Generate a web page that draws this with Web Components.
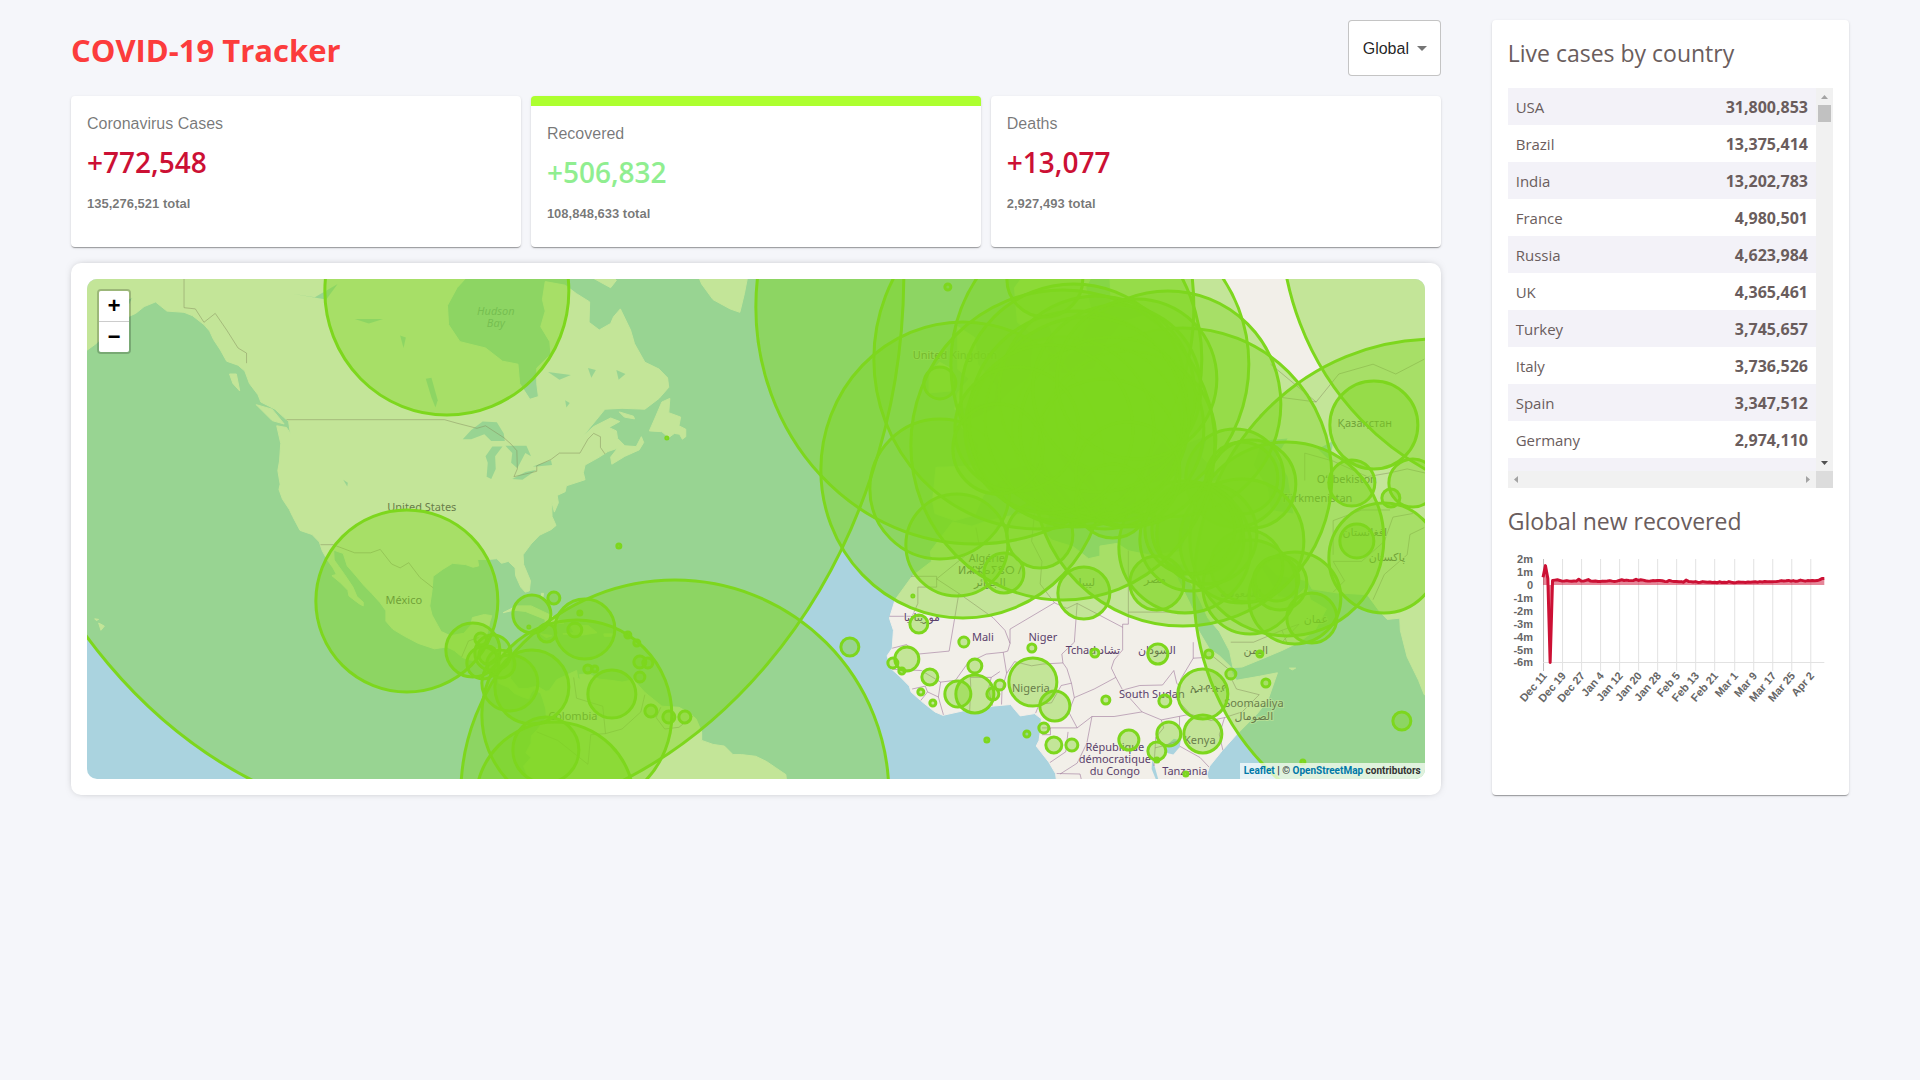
<!DOCTYPE html>
<html lang="en">
<head>
<meta charset="utf-8">
<meta name="viewport" content="width=device-width, initial-scale=1">
<title>COVID-19 Tracker</title>
<style>
    * { box-sizing: border-box; }

    body {
        margin: 0;
        min-height: 100vh;
        background: #f5f6fa;
        font-family: "Open Sans", "Noto Sans", sans-serif;
        color: #6a5d5d;
    }
</style>
</head>
<body>
<covid-app>
    <h1 slot="title">COVID-19 Tracker</h1>
    <country-select slot="picker"></country-select>

    <info-box slot="stats" label="Coronavirus Cases" cases="+772,548" total="135,276,521 total"></info-box>
    <info-box slot="stats" label="Recovered" cases="+506,832" total="108,848,633 total" active></info-box>
    <info-box slot="stats" label="Deaths" cases="+13,077" total="2,927,493 total"></info-box>

    <covid-map slot="map"></covid-map>

    <h3 slot="side">Live cases by country</h3>
    <country-table slot="side"></country-table>
    <h3 slot="side">Global new recovered</h3>
    <line-graph slot="side"></line-graph>
</covid-app>

<script>
class CovidApp extends HTMLElement {
    constructor() {
        super();
        this.attachShadow({ mode: "open" });
        this.shadowRoot.innerHTML = `
            <style>
                :host {
                    display: grid;
                    grid-template-columns: minmax(0, 23fr) minmax(0, 6fr);
                    gap: 51px;
                    padding: 20px 71px;
                }

                header {
                    display: flex;
                    justify-content: space-between;
                    align-items: center;
                    margin-bottom: 20px;
                }

                .stats {
                    display: flex;
                    gap: 10px;
                    margin-bottom: 16px;
                }

                .side {
                    background: #fff;
                    border-radius: 4px;
                    padding: 16px;
                    box-shadow: 0 2px 1px -1px rgba(0,0,0,.2), 0 1px 1px 0 rgba(0,0,0,.14), 0 1px 3px 0 rgba(0,0,0,.12);
                }

                ::slotted(h1) {
                    margin: 0;
                    padding-top: 4px;
                    font-size: 31px;
                    line-height: 44px;
                    font-weight: 700;
                    color: #fc3c3c;
                }

                ::slotted(h3) {
                    margin: 0 0 18px;
                    font-size: 23px;
                    line-height: 34px;
                    font-weight: 400;
                }

                ::slotted(country-table) { margin-bottom: 16px; }
            </style>
            <main>
                <header>
                    <slot name="title"></slot>
                    <slot name="picker"></slot>
                </header>
                <div class="stats"><slot name="stats"></slot></div>
                <slot name="map"></slot>
            </main>
            <aside class="side"><slot name="side"></slot></aside>
        `;
    }
}

class CountrySelect extends HTMLElement {
    constructor() {
        super();
        this.attachShadow({ mode: "open" });
        this.shadowRoot.innerHTML = `
            <style>
                :host { display: block; }

                .field {
                    display: grid;
                    align-items: center;
                }

                select, svg { grid-area: 1 / 1; }

                select {
                    appearance: none;
                    height: 56px;
                    padding: 0 30px 0 14px;
                    border: 1px solid rgba(0, 0, 0, .23);
                    border-radius: 4px;
                    background: #fff;
                    color: rgba(0, 0, 0, .87);
                    font: 16px "Liberation Sans", Arial, sans-serif;
                    cursor: pointer;
                }

                svg {
                    justify-self: end;
                    margin-right: 7px;
                    pointer-events: none;
                    fill: rgba(0, 0, 0, .54);
                }
            </style>
            <div class="field">
                <select aria-label="Country">
                    <option>Global</option>
                </select>
                <svg width="24" height="24" viewBox="0 0 24 24"><path d="M7 10l5 5 5-5z"/></svg>
            </div>
        `;
    }
}

class InfoBox extends HTMLElement {
    constructor() {
        super();
        this.attachShadow({ mode: "open" });
        this.shadowRoot.innerHTML = `
            <style>
                :host {
                    display: block;
                    flex: 1;
                    padding: 16px 16px 24px;
                    background: #fff;
                    border-radius: 4px;
                    box-shadow: 0 2px 1px -1px rgba(0,0,0,.2), 0 1px 1px 0 rgba(0,0,0,.14), 0 1px 3px 0 rgba(0,0,0,.12);
                    font-family: "Liberation Sans", Arial, sans-serif;
                    cursor: pointer;
                }

                :host([active]) { border-top: 10px solid greenyellow; }

                p {
                    margin: 0;
                    color: rgba(0, 0, 0, .54);
                }

                .label {
                    font-size: 16px;
                    line-height: 24px;
                }

                h2 {
                    margin: 8px 0 14px;
                    font: 600 28px/36px "Open Sans", "Noto Sans", sans-serif;
                    color: #cc1034;
                }

                :host([active]) h2 { color: lightgreen; }

                .total {
                    font-size: 13px;
                    line-height: 19px;
                    font-weight: 700;
                }
            </style>
            <p class="label"></p>
            <h2></h2>
            <p class="total"></p>
        `;
    }

    connectedCallback() {
        this.shadowRoot.querySelector(".label").textContent = this.getAttribute("label");
        this.shadowRoot.querySelector("h2").textContent = this.getAttribute("cases");
        this.shadowRoot.querySelector(".total").textContent = this.getAttribute("total");
    }
}

const COUNTRIES = [
    ["USA", "31,800,853"],
    ["Brazil", "13,375,414"],
    ["India", "13,202,783"],
    ["France", "4,980,501"],
    ["Russia", "4,623,984"],
    ["UK", "4,365,461"],
    ["Turkey", "3,745,657"],
    ["Italy", "3,736,526"],
    ["Spain", "3,347,512"],
    ["Germany", "2,974,110"],
    ["", ""]
];

class CountryTable extends HTMLElement {
    constructor() {
        super();
        this.attachShadow({ mode: "open" });
        this.shadowRoot.innerHTML = `
            <style>
                :host {
                    display: grid;
                    grid-template-columns: minmax(0, 1fr) 17px;
                    grid-template-rows: minmax(0, 1fr) 17px;
                    height: 400px;
                }

                .scroller {
                    overflow: auto;
                    scrollbar-width: none;
                }

                table {
                    width: 100%;
                    border-collapse: collapse;
                    font-size: 15px;
                    line-height: 21px;
                }

                tr { height: 37px; }
                tr:nth-of-type(odd) { background: #f3f2f8; }
                td { padding: 9px 8px 7px; }

                td:last-child {
                    text-align: right;
                    font-size: 16px;
                    font-weight: 700;
                }

                .bar {
                    display: flex;
                    align-items: center;
                    background: #f1f1f1;
                }

                .bar.y { flex-direction: column; }
                .bar.x { justify-content: space-between; }
                .corner { background: #dcdcdc; }

                .thumb {
                    width: 13px;
                    height: 17px;
                    background: #c1c1c1;
                    margin-bottom: auto;
                }

                button {
                    width: 17px;
                    height: 17px;
                    padding: 0;
                    border: 0;
                    background: none;
                    color: #a3a3a3;
                }

                button.on { color: #505050; }
                button svg { display: block; fill: currentColor; }
            </style>
            <div class="scroller"><table><tbody></tbody></table></div>
            <div class="bar y">
                <button class="up" aria-label="Scroll up"><svg width="17" height="17"><path d="M5 11l3.500-4 3.500 4z"/></svg></button>
                <div class="thumb"></div>
                <button class="down on" aria-label="Scroll down"><svg width="17" height="17"><path d="M5 7l3.500 4 3.500-4z"/></svg></button>
            </div>
            <div class="bar x">
                <button aria-label="Scroll left"><svg width="17" height="17"><path d="M10 5v7l-4-3.500z"/></svg></button>
                <button aria-label="Scroll right"><svg width="17" height="17"><path d="M7 5v7l4-3.500z"/></svg></button>
            </div>
            <div class="corner"></div>
        `;
    }

    connectedCallback() {
        this.shadowRoot.querySelector("tbody").innerHTML = COUNTRIES
            .map(([name, cases]) => `<tr><td>${name}</td><td>${cases}</td></tr>`)
            .join("");

        const scroller = this.shadowRoot.querySelector(".scroller");
        this.shadowRoot.querySelector(".up").onclick = () => scroller.scrollBy(0, -37);
        this.shadowRoot.querySelector(".down").onclick = () => scroller.scrollBy(0, 37);
    }
}

const DATES = ["Dec 11", "Dec 19", "Dec 27", "Jan 4", "Jan 12", "Jan 20", "Jan 28", "Feb 5",
    "Feb 13", "Feb 21", "Mar 1", "Mar 9", "Mar 17", "Mar 25", "Apr 2"];

// new recoveries per day, in millions
const RECOVERED = [0.6, 1.5, 0.5, -6, 0.35, 0.38, 0.4, 0.36, 0.3, 0.32, 0.34, 0.3, 0.29, 0.32, 0.3, 0.44, 0.32, 0.3,
    0.36, 0.42, 0.3, 0.29, 0.32, 0.28, 0.27, 0.3, 0.29, 0.31, 0.34, 0.3, 0.28, 0.3, 0.36, 0.4, 0.36, 0.38, 0.36,
    0.34, 0.36, 0.44, 0.36, 0.4, 0.38, 0.33, 0.3, 0.32, 0.34, 0.33, 0.35, 0.34, 0.33, 0.28, 0.26, 0.36, 0.3, 0.28,
    0.27, 0.25, 0.26, 0.22, 0.38, 0.28, 0.26, 0.24, 0.26, 0.2, 0.22, 0.26, 0.24, 0.22, 0.24, 0.2, 0.22, 0.18,
    0.25, 0.2, 0.22, 0.19, 0.26, 0.22, 0.18, 0.2, 0.23, 0.21, 0.22, 0.2, 0.23, 0.22, 0.24, 0.25, 0.22, 0.26,
    0.24, 0.27, 0.25, 0.26, 0.25, 0.26, 0.28, 0.3, 0.34, 0.32, 0.33, 0.36, 0.3, 0.34, 0.29, 0.32, 0.38, 0.34,
    0.3, 0.34, 0.33, 0.36, 0.33, 0.34, 0.4, 0.5, 0.5];

class LineGraph extends HTMLElement {
    constructor() {
        super();
        this.attachShadow({ mode: "open" });
        this.shadowRoot.innerHTML = `
            <style>
                :host { display: block; }

                svg {
                    display: block;
                    width: 100%;
                    overflow: visible;
                }

                text {
                    font: 700 11px "Liberation Sans", Arial, sans-serif;
                    fill: #666;
                    text-anchor: end;
                }

                .grid { stroke: #e2e2e2; }
                .axis { stroke: #bdbdbd; }
                .area { fill: #cc1034; fill-opacity: .5; }

                .line {
                    fill: none;
                    stroke: #cc1034;
                    stroke-width: 3;
                    stroke-linejoin: round;
                }
            </style>
            <svg viewBox="0 -6 325 168" role="img" aria-label="Global new recovered"></svg>
        `;
    }

    connectedCallback() {
        const left = 35, right = 316, zero = 23;
        const y = (v) => zero - v * 12.9;
        const step = (right - left) / (RECOVERED.length - 1);
        let out = "";

        for (let v = 2; v >= -6; v--) {
            out += `<text x="25" y="${y(v) + 4}">${v ? v + "m" : 0}</text>`;
        }
        DATES.forEach((date, i) => {
            const x = Math.round(left + i * step * 8) + 0.5;
            out += `<path class="${i ? "grid" : "axis"}" d="M${x} -3V109"/>`;
            out += `<text transform="translate(${x + 4} 114) rotate(-49)">${date}</text>`;
        });
        out += `<path class="grid" d="M${left} 100.5H${right}"/>`;

        const points = RECOVERED.map((v, i) => `${(left + i * step).toFixed(1)} ${y(v).toFixed(1)}`).join("L");
        out += `<path class="area" d="M${left} ${zero}L${points}V${zero}z"/><path class="line" d="M${points}"/>`;
        this.shadowRoot.querySelector("svg").innerHTML = out;
    }
}

// web mercator at zoom 3, centred on the Atlantic
const project = ([lon, lat]) => {
    const merc = Math.log(Math.tan(Math.PI / 4 + lat * Math.PI / 360));
    return [899.3 + lon * 5.689, 461.4 - merc * 325.95].map((n) => n.toFixed(1)).join(" ");
};

const LAND = [
    // the Americas
    [[-165,64.5],[-165,54.5],[-160,55.6],[-156.5,57],[-154,58.3],[-153.5,59.3],[-152,60.3],[-151,61],[-150,61.2],[-151.7,59.3],[-149.5,59.8],[-148,60.4],[-146,60.8],[-144,60],[-141,59.9],[-139.5,59.6],[-137.5,58.8],[-136.5,58.2],[-135.8,57.4],[-134.6,56.4],[-133.5,55.3],[-131.5,54.9],[-130.3,54.3],[-129.5,53],[-128,51.8],[-127.5,51],[-125,50.2],[-123.5,49.3],[-122.6,48.8],[-122.3,47.4],[-123,48.1],[-124.7,48.3],[-124,46.2],[-124.2,44],[-124.5,42.8],[-124.1,41],[-124.3,40.3],[-123.7,39],[-122.5,37.6],[-121.9,36.6],[-120.6,34.6],[-118.5,34],[-117.2,32.9],[-116.7,31.6],[-115.8,30.2],[-114.8,29],[-114.2,28],[-115,27.8],[-113.5,26.7],[-112.2,25.5],[-112,24.6],[-110.3,23.4],[-109.5,23],[-109.5,23.6],[-110.6,24.5],[-111.3,26],[-112.8,28],[-114.6,30.2],[-114.7,31.7],[-113,31.2],[-112.3,29.3],[-110.9,27.9],[-109.4,26.3],[-108,25],[-106.5,23.5],[-105.5,22.2],[-105.5,20.5],[-104.3,19.2],[-102.2,18],[-99.8,16.8],[-97,15.9],[-94.8,16.2],[-93.5,15.6],[-92,14.4],[-90,13.8],[-87.7,13.2],[-87.2,12.6],[-85.8,11],[-85.7,10],[-84,9.3],[-83,8.3],[-81.5,7.6],[-80.4,7.3],[-80,8.3],[-79.5,8.9],[-78.3,8.3],[-77.9,7.2],[-77.4,5.5],[-77.3,4],[-78.8,2],[-79.9,0.8],[-80,-0.5],[-80.9,-2.2],[-80,-3],[-81.3,-4.5],[-80,-8],[-35,-8],[-35.2,-6],[-37,-4.8],[-38.6,-3.7],[-40.5,-2.8],[-43,-2.5],[-44.5,-2.5],[-46,-1],[-48,-0.7],[-50,0],[-50,1.5],[-51,3.8],[-52.5,5],[-54,5.8],[-57,6],[-58.5,7.2],[-60,8.4],[-61,9.5],[-62,10.6],[-64,10.2],[-66,10.5],[-68,10.7],[-69.8,11.6],[-71.5,11.5],[-71.3,10.5],[-71.8,11],[-72,12.2],[-74.2,11.2],[-75.5,10.6],[-76.8,8.7],[-77.4,8.6],[-79,9.5],[-80.5,9.1],[-82.2,9.1],[-83.6,10.8],[-83.5,14.5],[-83.3,15],[-85,15.9],[-88.5,15.8],[-88.2,17.5],[-87.7,18.5],[-87.2,20.5],[-86.9,21.4],[-88.2,21.6],[-90.3,21.1],[-90.6,19.8],[-91.8,18.5],[-94.2,18.1],[-95.8,18.8],[-96.4,19.8],[-97.4,21.5],[-97.8,23],[-97.4,25.5],[-97.2,27.7],[-95.5,28.8],[-93.8,29.7],[-91.5,29.5],[-90.2,29.1],[-89.2,29.3],[-89.4,30.3],[-87.5,30.3],[-86,30.4],[-85.2,29.7],[-84,30],[-82.8,29],[-82.7,27.8],[-81.8,26],[-81,25.2],[-80.3,25.4],[-80.1,27],[-81.3,29.5],[-81.4,31],[-80,32.6],[-78.5,33.9],[-76.5,34.7],[-75.6,35.3],[-76.3,36.6],[-76.4,38.8],[-75.9,37.2],[-75.2,38.5],[-75.4,39.5],[-74,40],[-73.8,40.8],[-70.5,41.6],[-70.8,42.5],[-70.5,43.5],[-68,44.5],[-66.5,45.2],[-64.8,45.6],[-66,44.5],[-65.8,43.6],[-63.5,44.6],[-61,45.4],[-60.2,46.3],[-60.6,47],[-61.5,45.8],[-63.5,45.9],[-64.8,46.8],[-65,47.7],[-66.3,48.1],[-64.4,48.8],[-66,49.2],[-69,48.2],[-71,47],[-68.5,49],[-67,50.2],[-64,50.3],[-60,50.2],[-57.5,51.4],[-55.8,52.6],[-56,53.6],[-57.5,54.5],[-60,55.2],[-61.8,57],[-62.5,58.3],[-64.3,60.2],[-65.5,59.5],[-66,58.9],[-68,58.3],[-69.8,59],[-69.7,60.8],[-72,61.5],[-74,62.2],[-77.5,62.5],[-78,61],[-77.5,60],[-78.3,58.6],[-76.7,57.2],[-76.5,56],[-79,54.6],[-79,53],[-78.7,51.6],[-80.2,51.3],[-82,53],[-82.3,55],[-85,55.3],[-88,56.6],[-92.5,57.2],[-94.5,58.8],[-94.7,60.5],[-93,62],[-91,63],[-90,64.5]],
    [[-59.2,47.7],[-57,47.6],[-55.8,46.9],[-54.8,47.4],[-53.9,47.3],[-53.4,46.7],[-52.8,47],[-52.8,47.9],[-54,48.3],[-53.7,49.3],[-55.8,49.8],[-55.6,51.4],[-57,51],[-58.2,49.2]],
    [[-64.5,49.9],[-62,49.4],[-61.8,49.1],[-63.6,49.3]],
    [[-73,64.5],[-70,63],[-66,62],[-65,62.6],[-67,63.5],[-64.6,62.9],[-64,64.5]],
    [[-52.5,65],[-50,62.3],[-48,61],[-45,60.2],[-43.3,59.9],[-42.5,61.5],[-41,65]],
    [[-128.3,50.7],[-125.5,50.2],[-123.4,48.5],[-125.5,48.9]],
    [[-133,54],[-131.8,54],[-131.2,52.2],[-132.4,53]],
    [[-154.5,57],[-152.5,58.5],[-152.3,57.5]],
    [[-84.9,21.9],[-82.5,23],[-80,23],[-77,21.7],[-74.2,20.2],[-77.5,19.9],[-77.5,20.8],[-81,22.1],[-83,22.3]],
    [[-74.4,18.4],[-72.4,18.6],[-73.2,19.8],[-70,19.8],[-68.4,18.6],[-71,18.2]],
    [[-78.3,18.4],[-76.3,18.1],[-77.3,17.8]],
    [[-67.2,18.4],[-65.7,18.4],[-65.9,18],[-67.1,18]],
    [[-78.2,25],[-77.8,25],[-78,24]],
    [[-156,20.2],[-155,19.7],[-155.6,19]],
    [[-156.7,20.9],[-156,20.8],[-156.4,20.6]],
    // Africa
    [[-5.9,35.8],[-9.8,31.5],[-9.6,30],[-13,27.7],[-16,24],[-17,21],[-16.3,19],[-16.5,16],[-17.4,14.7],[-16.7,12.5],[-15,11],[-13.5,9.5],[-13.2,8.5],[-11.4,6.9],[-9,5],[-7.6,4.4],[-4,5.2],[-2,4.8],[1,6],[4.3,6.3],[5.2,5.2],[6,4.3],[8.5,4.7],[9.7,3.8],[9.6,2],[9.3,0],[8.8,-1],[11,-3.8],[12.2,-5.8],[12.5,-8],[39.5,-8],[38.8,-6],[39.3,-4.5],[41.5,-1.8],[44,1],[47.5,4.5],[49.5,7],[51.2,11.8],[48,11.2],[44,10.5],[43.2,11.8],[43,12.8],[41,14.7],[39.3,15.8],[37.3,19],[37,21],[35.5,24],[33.8,27],[32.5,29.8],[34.5,31.5],[32.3,31.3],[29,30.9],[25,31.6],[23,32.7],[20,32.3],[20,30.8],[18,30.4],[15.3,32.2],[11.5,33.2],[10.2,34.3],[11,37],[9.8,37.3],[5,36.8],[0,35.9],[-2.5,35.2]],
    // Eurasia
    [[32.5,29.8],[34.3,31.3],[35.9,35.5],[36,36.8],[32,36.2],[28,36.7],[26.5,39],[26.5,40.3],[29,41],[33,42],[38,41],[41.5,41.7],[38,44.5],[39,47.2],[35,46.2],[33.5,44.6],[31,46.6],[28.8,44.5],[28,42],[29,41.2],[26,40.7],[23,40.4],[24,37.7],[22.5,36.6],[21,38],[19.4,41],[19,42],[14,45],[12.4,45],[13.6,43.6],[18.4,40],[16.8,40.4],[16,38],[12.5,41.5],[10,44],[7,43.5],[3.2,43],[3,41.8],[-0.5,39.5],[-2,36.8],[-5.5,36],[-9,37],[-9.4,38.7],[-8.8,43.2],[-1.6,43.4],[-1.2,46],[-4.6,48.3],[1.5,50.2],[4,52],[8,53.8],[8.2,57],[10.5,57.5],[11,54.2],[14,54],[19,54.5],[21,57],[24,59],[30,60],[22,60.5],[21.5,65],[80,65],[80,8],[77,8],[76,10.5],[74,14.5],[72.8,19],[72.7,21],[70.5,20.8],[69,22.3],[67,24.8],[61.6,25.1],[57.3,25.7],[56.5,27],[51,28],[48.7,30.2],[48,29.5],[50,26.7],[51.3,24.5],[54,24.1],[56.3,26],[57,24],[59.8,22.5],[57.8,19],[55,17],[52,15.6],[48,14],[45,12.8],[43.4,12.7],[42.8,15.5],[41,18.8],[39,21],[37,25],[34.9,28.2],[35,29.5]],
    [[5,62],[5.5,59],[8,58],[11,59],[13,55.5],[16,56.5],[18.5,60],[17.5,62],[21,65],[10,65]],
    [[-5.5,50.2],[1.3,51.2],[1.6,52.8],[-1.5,55],[-2,57.6],[-5,58.6],[-5,54.5],[-3,53.5],[-5,52]],
    [[-10,52],[-6.3,52.2],[-6,54.5],[-8.2,55.2],[-10,54]],
    [[53.3,12.6],[54.4,12.6],[53.8,12.3]]
];

const LAKES = [
    [[-92,46.7],[-90.5,47.8],[-88.5,48.8],[-86,48.7],[-84.8,47.4],[-84.6,46.5],[-87,46.5],[-88.2,47.3],[-90.5,46.7]],
    [[-87.8,42],[-87,41.7],[-86.2,43],[-86.3,44.6],[-85,45.8],[-86.8,45.8],[-88,44.6],[-87.6,43.8]],
    [[-84.5,45.9],[-83.3,45],[-83.5,43.8],[-82.4,43.1],[-81.6,44.2],[-81,45],[-80,44.6],[-80.8,45.9]],
    [[-83.3,41.7],[-81,42.6],[-79,42.9],[-81.5,41.6]],
    [[-79.7,43.3],[-76.5,44.1],[-76.3,43.5],[-79,43.3]],
    [[-98.5,53.5],[-97.5,53.6],[-96.4,51.2],[-96.8,50.4],[-97.5,51.5]],
    [[-122,61.5],[-118,61.2],[-114,62.3],[-116,61]],
    [[-111,59.3],[-106,59.3],[-108.5,58.9]],
    [[-103,57.8],[-102,57.6],[-102.4,56.6]],
    [[-113,41.6],[-112.2,41.2],[-112.3,40.7]],
    [[-74,51.2],[-73.2,50.9],[-73.8,50.4]],
    [[-70,54.6],[-68.6,54.4],[-69.4,53.6]],
    [[-65,54.4],[-63.4,54],[-64.6,53.4]],
    [[-77,54.2],[-73,53.9],[-75,53.4]],
    [[31.8,-0.8],[33,0.3],[34.2,0],[34,-1.2],[32.9,-2.5],[31.8,-2.2]],
    [[29.2,-3.4],[29.6,-4.5],[30.3,-7],[29.9,-7],[29.1,-5]],
    [[47,43.5],[48.5,46.5],[53,46.8],[51,44.5],[53,42],[54,37],[50,37.5],[49.5,40.5]],
    [[58.3,45.5],[61,46.5],[60.5,44]]
];

const BORDERS = [
    [[-141,65],[-141,60.3],[-139,60.2],[-137.5,59],[-135.5,59.8],[-133.5,58.3],[-131.5,56.6],[-130,56.1],[-130,55.1]],
    [[-123,49],[-95.2,49],[-93,48.6],[-89.5,48],[-88,48.3],[-84.8,46.9],[-83.5,46.1],[-82.5,45.3],[-82.4,43],[-83,42],[-79,42.7],[-79,43.4],[-76.5,44.2],[-75,45],[-71.4,45],[-70,46.7],[-69,47.4],[-67.8,47],[-67.8,45.7],[-67,44.9]],
    [[-117,32.5],[-114.8,32.5],[-111,31.3],[-108.2,31.3],[-106.5,31.8],[-104.5,29.6],[-103,29],[-101.5,29.8],[-99.5,27.5],[-97.2,25.9]],
    [[-92.2,14.5],[-91,17.2],[-89.2,17.8]], [[-66.9,1.2],[-67.4,6],[-72,7.4],[-72.5,11]],
    [[-79,1.5],[-75.3,0],[-70,-4.2],[-69.5,1],[-66.9,1.2],[-64,2],[-60.7,5],[-60,8]],
    [[-57.2,5.8],[-58,4],[-56.5,2],[-54,2.3],[-51.6,4.2]],
    [[-13.2,27.7],[-8.7,27.7],[-8.7,26],[-12,26],[-12,23.4],[-13,21.3],[-17,21.3]],
    [[-8.7,27.3],[-4.8,25],[-6.5,15.5],[-12,15],[-14,16.6],[-16.5,16]],
    [[-4.8,25],[1.2,21.1],[3.3,19],[4.2,16.8],[4.2,19.2],[12,23.5],[14.2,22.6]],
    [[-8.7,27.3],[-3.6,30.9],[-1.2,32.3],[-1.8,35]], [[12,23.5],[9.5,26.5],[9.8,30],[8,33],[8.5,37]],
    [[3.6,11.7],[3,15.3],[0,15],[-3.2,13.5],[-5.4,10.5],[-8,10.2],[-11.4,12.2],[-16.5,12.4]],
    [[4.2,16.8],[3.8,15.5],[3,15.3]], [[3.6,11.7],[5,13.7],[8,13],[10,13.3],[13.5,13.5],[14.2,12.5],[15,10],[13.2,9.6],[11.5,6.6],[9.3,6.3],[8.7,4.8]],
    [[2.7,6.3],[2.8,9],[3.6,11.7]], [[1.1,6.1],[0.4,9],[0.9,11],[2.4,12]], [[-2.9,5],[-2.7,9.5],[-2.8,11],[0.9,11]], [[-7.5,4.5],[-8.4,7.6],[-8,10.2]], [[-11.5,7],[-10.3,8.5],[-8.4,7.6]], [[-13,9],[-10.7,9.5],[-10.3,8.5]],
    [[14.2,22.6],[16,23.4],[24,19.5],[24,15.7],[22.5,14],[22,12.6],[22.8,11],[19,9],[15.5,7.5]],
    [[25,31.6],[25,22],[37,22]], [[24,19.5],[24,20],[25,20],[25,22]],
    [[13.5,13.5],[13.3,15],[15.5,17],[16,23.4]],
    [[15,10],[15.5,7.5],[14.5,5],[16,2.2],[18.6,4.2],[22.5,4.2],[27.4,5],[24,8.8],[22.8,11]],
    [[24,8.8],[27,9.6],[31,9.7],[33,12.2],[33.5,10],[34,9.5]], [[36.4,17],[36.4,14.3],[34.2,10.7],[34,8.5],[33,7.8],[35.9,4.6]],
    [[27.4,5],[30.8,3.6],[35.9,4.6],[39.5,3.5],[41.9,4],[45,5],[48,8],[44,9],[43,11]], [[36.4,14.3],[40,14.5],[42.5,12.5]],
    [[41.9,4],[41,1],[41.6,-1.7]], [[34,4.2],[34,0],[31,-1],[29.7,-1.3],[29.5,-4.5]], [[34,-1],[37.6,-3],[39.2,-4.7]], [[30.8,3.6],[31.2,2.2],[29.8,0.5],[29.7,-1.3]],
    [[18.6,4.2],[17.7,-0.5],[16,-4],[13,-5.9]], [[9.8,2.2],[16,2.2]], [[9.8,1],[11.3,1],[11.3,2.2]], [[14.4,1.5],[14,-2],[11.2,-3.9]], [[12.4,-5.8],[16.5,-5.9],[17,-8]],
    [[43,17],[47,17],[52,19],[55,20],[52,17]], [[52,19],[53,16.6]], [[50,55],[58,51],[62,54],[68,55],[72,54],[77,55.5]], [[48,49.5],[52,51.5],[58,51]],
    [[61,25.2],[63,27],[61,30],[66,30],[70,33],[71.5,36.5],[75,37]], [[56,41.5],[56,45],[61,44],[67,42],[71,42.5],[74,43],[80,42]], [[61,31],[61,36],[66,37.5],[71,37.5]], [[68,24],[70,28],[74,31],[74.5,34],[77,35]]
];

// x, y, radius and, for the circles that the projection stretches, the vertical radius
const CIRCLES = [
    [351,-6,466,553], [360,12,122,124], [320,322,91], [588,515,214], [490,436,95], [468,522,79], [459,471,33],
    [445,408,37], [423,404,28], [414,385,14], [386,371,27], [406,374,18], [396,384,16], [401,376,9], [394,360,6],
    [445,335,19], [467,319,6], [488,351,7], [498,350,30], [460,354,9], [442,348,1], [493,334,2], [541,356,3],
    [550,364,3], [553,383,6], [561,384,5], [553,398,5], [501,390,4], [508,390,3], [525,415,24], [564,432,6],
    [582,438,6], [598,438,6], [532,267,2], [580,159,1],
    [763,368,9], [826,317,1], [832,345,9], [877,363,5], [945,369,4], [820,380,12], [806,384,5], [815,392,3],
    [843,398,8], [834,413,3], [846,424,3], [888,387,7], [871,415,13], [888,415,19], [906,415,6], [913,406,5],
    [946,403,24], [968,427,15], [1008,374,4], [1019,421,4], [957,449,5], [967,466,8], [985,466,6], [940,455,3],
    [900,461,2], [1042,461,10], [1071,375,10], [1078,422,6], [1116,415,25], [1116,455,19], [1082,455,12],
    [1070,472,9], [1070,481,2], [1099,495,2], [1122,375,4], [1144,395,5], [1179,404,4], [1173,375,3],
    [1315,442,9], [1216,483,2],
    [1348,310,241,250], [1468,-60,274,284], [1287,146,44], [1265,204,23], [1326,204,24], [1304,219,9],
    [1270,262,17], [1297,279,55], [1200,260,97], [1096,198,149], [1081,125,113], [1148,199,49], [1165,205,44],
    [1155,199,36], [1155,262,62], [1208,319,46], [1225,339,25], [1163,308,47], [1193,304,27], [1190,300,22],
    [1160,287,36], [1110,250,45], [1098,268,66], [1105,260,52], [1103,250,45], [1120,255,50], [1070,304,27],
    [997,314,26], [953,256,33], [917,294,20], [870,266,51], [853,210,70], [853,104,16], [861,8,3],
    [888,28,219,237], [951,80,164,170], [876,191,142,148], [976,166,152,155], [1013,85,149,152],
    [987,118,113], [1041,160,88], [1010,150,85], [1018,175,75], [975,150,92], [990,140,108], [1010,115,98],
    [1025,150,92], [1000,140,102], [1030,110,84], [962,150,84], [930,150,62], [911,170,45], [1041,195,52],
    [1026,222,37], [958,0,38], [1050,100,80]
];

const LABELS = [
    ["United States", 335, 232], ["México", 317, 325], ["Colombia", 486, 441],
    ["Algérie", 900, 283], ["ⵍⵣⵣⴰⵢⴻⵔ /", 903, 295], ["الجزائر", 903, 307], ["ليبيا", 1000, 307],
    ["موريتانيا", 835, 342], ["Mali", 896, 362], ["Niger", 956, 362], ["Tchad تشاد", 1006, 375],
    ["السودان", 1070, 375], ["South Sudan", 1065, 419], ["Nigeria", 944, 413],
    ["République", 1028, 472], ["démocratique", 1028, 484], ["du Congo", 1028, 496],
    ["Kenya", 1113, 465], ["Tanzania", 1098, 496], ["Soomaaliya", 1167, 428], ["الصومال", 1167, 441],
    ["ኢትዮጵያ", 1122, 413], ["اليمن", 1169, 375], ["عمان", 1229, 344], ["السعودية", 1154, 318], ["مصر", 1068, 304],
    ["پاکستان", 1300, 282], ["Қазақстан", 1278, 148], ["Oʻzbekiston", 1260, 204], ["Türkmenistan", 1230, 223],
    ["افغانستان", 1278, 257], ["United Kingdom", 868, 80]
];

class CovidMap extends HTMLElement {
    constructor() {
        super();
        this.attachShadow({ mode: "open" });
        this.shadowRoot.innerHTML = `
            <style>
                :host {
                    display: block;
                    padding: 16px;
                    background: #fff;
                    border-radius: 10px;
                    box-shadow: 0 0 8px -4px rgba(0, 0, 0, .5);
                }

                .map {
                    position: relative;
                    height: 500px;
                    border-radius: 10px;
                    overflow: hidden;
                    background: #aad3df;
                }

                .map > svg {
                    display: block;
                    width: 100%;
                    height: 100%;
                }

                .land { fill: #f2efe9; stroke: #f2efe9; }
                .lake { fill: #aad3df; }
                .border { fill: none; stroke: #8d618b; stroke-opacity: .5; }

                text {
                    font: 11px "Noto Sans", "DejaVu Sans", sans-serif;
                    text-anchor: middle;
                    fill: #5b3f6b;
                    stroke: #f2efe9;
                    stroke-width: 2;
                    stroke-opacity: .6;
                    paint-order: stroke;
                }

                .sea {
                    font-style: italic;
                    fill: #6b94ad;
                    stroke: none;
                }

                .circle {
                    fill: #7dd71d;
                    fill-opacity: .4;
                    stroke: #7dd71d;
                    stroke-width: 3;
                }

                .zoom {
                    position: absolute;
                    top: 10px;
                    left: 10px;
                    border: 2px solid rgba(0, 0, 0, .2);
                    border-radius: 4px;
                    background-clip: padding-box;
                }

                .zoom button {
                    display: block;
                    width: 30px;
                    height: 30px;
                    padding: 4px 0 0;
                    border: 0;
                    background: #fff;
                    color: #000;
                    font: bold 22px/26px "Liberation Mono", monospace;
                    cursor: pointer;
                }

                .zoom button:first-child {
                    height: 31px;
                    border-bottom: 1px solid #ccc;
                    border-radius: 2px 2px 0 0;
                }

                .zoom button:last-child { border-radius: 0 0 2px 2px; }

                .credit {
                    position: absolute;
                    right: 0;
                    bottom: 0;
                    padding: 0 4px;
                    background: rgba(255, 255, 255, .7);
                    font: 700 10px/16px Roboto, "Liberation Sans", sans-serif;
                    color: #333;
                }

                a {
                    color: #0078a8;
                    text-decoration: none;
                }
            </style>
            <div class="map">
                <svg viewBox="0 0 1338 500" preserveAspectRatio="xMidYMid slice" role="img" aria-label="Map of recovered cases"></svg>
                <div class="zoom">
                    <button aria-label="Zoom in">+</button>
                    <button aria-label="Zoom out">−</button>
                </div>
                <div class="credit">
                    <a href="#leaflet">Leaflet</a> | © <a href="#osm">OpenStreetMap</a> contributors
                </div>
            </div>
        `;
    }

    connectedCallback() {
        const path = (cls, end) => (points) => `<path class="${cls}" d="M${points.map(project).join("L")}${end}"/>`;

        this.shadowRoot.querySelector(".map > svg").innerHTML = [
            ...LAND.map(path("land", "z")),
            ...LAKES.map(path("lake", "z")),
            ...BORDERS.map(path("border", "")),
            `<text class="sea" x="409" y="36">Hudson</text><text class="sea" x="409" y="48">Bay</text>`,
            ...LABELS.map(([name, x, y]) => `<text x="${x}" y="${y}">${name}</text>`),
            ...CIRCLES.map(([x, y, rx, ry = rx]) => `<ellipse class="circle" cx="${x}" cy="${y}" rx="${rx}" ry="${ry}"/>`)
        ].join("");
    }
}

customElements.define("covid-app", CovidApp);
customElements.define("country-select", CountrySelect);
customElements.define("info-box", InfoBox);
customElements.define("country-table", CountryTable);
customElements.define("line-graph", LineGraph);
customElements.define("covid-map", CovidMap);
</script>
</body>
</html>
